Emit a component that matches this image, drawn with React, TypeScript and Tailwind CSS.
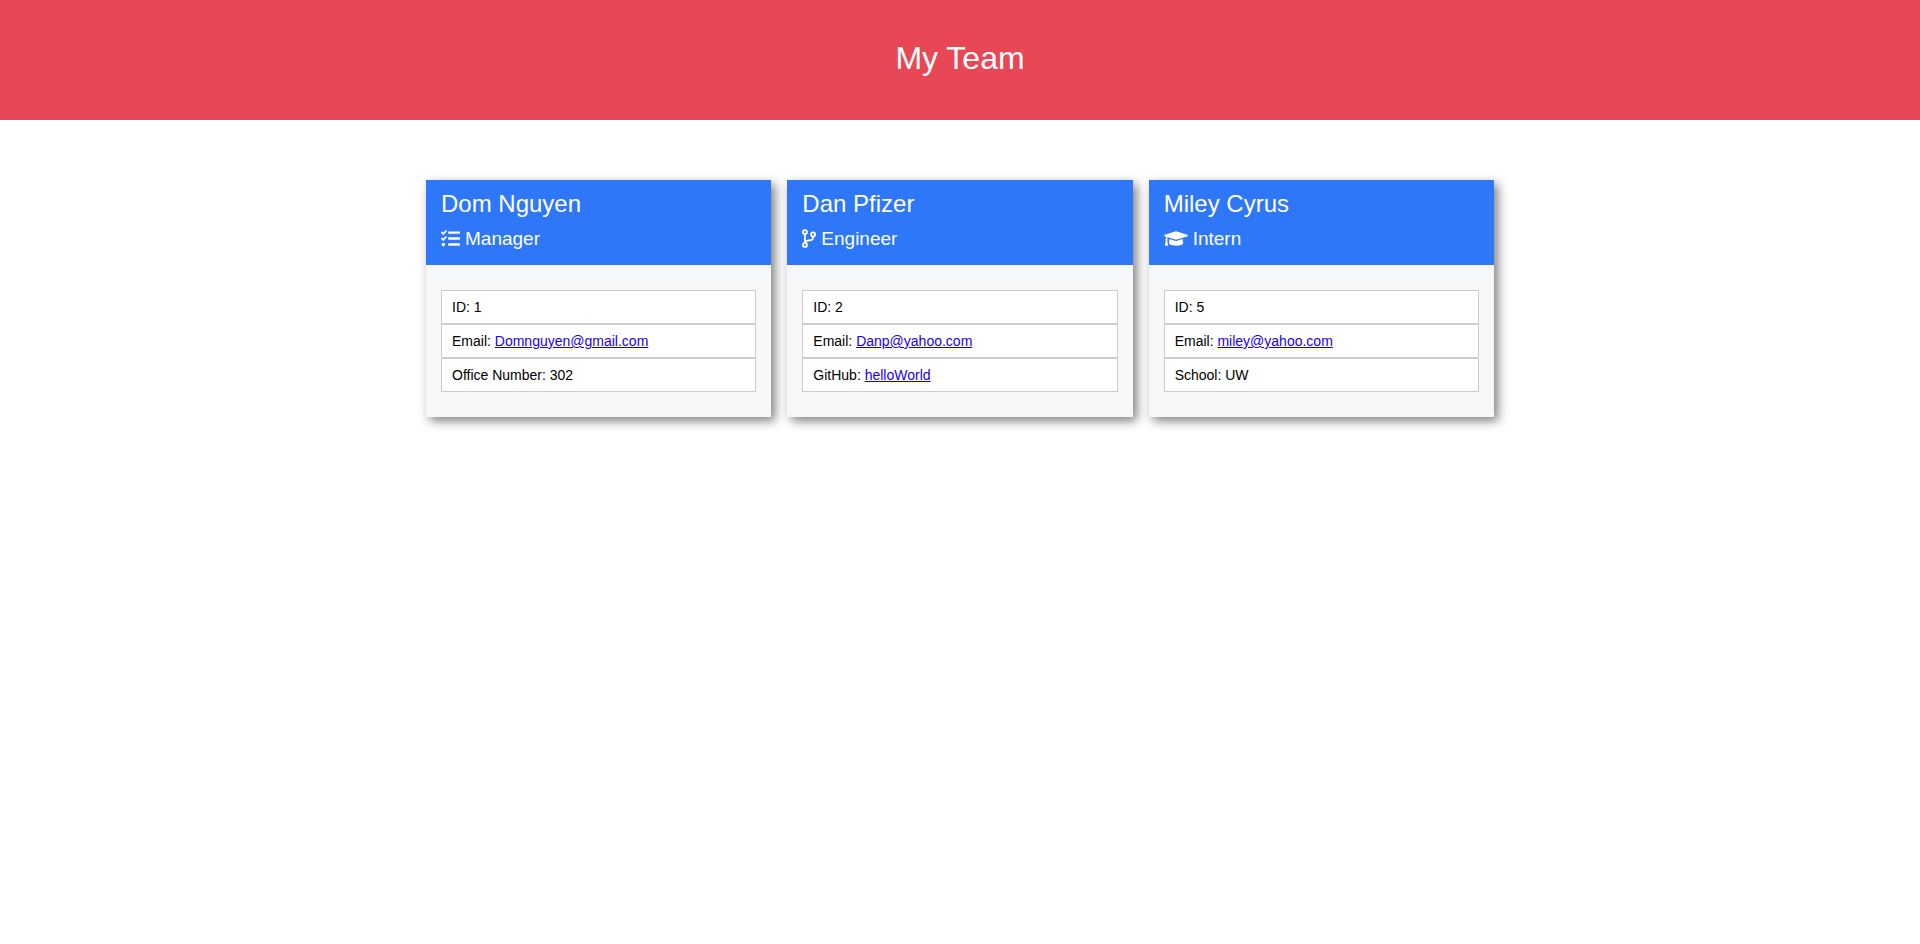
import type { ReactNode } from "react";
import { FaGraduationCap, FaTasks } from "react-icons/fa";

type Detail = { label: string; value: string; href?: string };
type Member = { name: string; role: string; icon: ReactNode; details: Detail[] };

function BranchIcon() {
  return (
    <svg
      viewBox="0 0 384 512"
      className="h-[19px] w-[14px]"
      fill="none"
      stroke="currentColor"
      strokeWidth="50"
      aria-hidden="true"
    >
      <circle cx="80" cy="80" r="55" />
      <circle cx="304" cy="144" r="55" />
      <circle cx="80" cy="432" r="55" />
      <path d="M80 135v242" />
      <path d="M305 199c0 108-52 104-122 111-42 4-80 10-96 40" />
    </svg>
  );
}

const team: Member[] = [
  {
    name: "Dom Nguyen",
    role: "Manager",
    icon: <FaTasks className="h-[19px] w-[19px]" aria-hidden="true" />,
    details: [
      { label: "ID", value: "1" },
      { label: "Email", value: "Domnguyen@gmail.com", href: "mailto:Domnguyen@gmail.com" },
      { label: "Office Number", value: "302" },
    ],
  },
  {
    name: "Dan Pfizer",
    role: "Engineer",
    icon: <BranchIcon />,
    details: [
      { label: "ID", value: "2" },
      { label: "Email", value: "Danp@yahoo.com", href: "mailto:Danp@yahoo.com" },
      { label: "GitHub", value: "helloWorld", href: "https://github.com/helloWorld" },
    ],
  },
  {
    name: "Miley Cyrus",
    role: "Intern",
    icon: <FaGraduationCap className="h-[19px] w-[24px]" aria-hidden="true" />,
    details: [
      { label: "ID", value: "5" },
      { label: "Email", value: "miley@yahoo.com", href: "mailto:miley@yahoo.com" },
      { label: "School", value: "UW" },
    ],
  },
];

function MemberCard({ member }: { member: Member }) {
  return (
    <article className="bg-[#f5f7f9] shadow-[4px_4px_10px_#808080]">
      <header className="bg-[#2e77f8] px-[15px] pt-2 pb-[14px] text-white">
        <h2 className="text-2xl leading-8">{member.name}</h2>
        <h3 className="mt-[6px] flex items-center gap-[5px] text-[19px] leading-[25px]">
          {member.icon}
          {member.role}
        </h3>
      </header>
      <ul className="px-[15px] py-[25px] text-sm leading-4 text-black">
        {member.details.map((detail) => (
          <li key={detail.label} className="border border-[#cccccc] bg-white px-[10px] py-2">
            {detail.label}:{" "}
            {detail.href ? (
              <a href={detail.href} className="text-[#1800ee] underline">
                {detail.value}
              </a>
            ) : (
              detail.value
            )}
          </li>
        ))}
      </ul>
    </article>
  );
}

export default function App() {
  return (
    <div className="min-h-screen bg-white font-['Liberation_Sans',Arial,sans-serif]">
      <header className="bg-[#e84855] px-4 pt-[38px] pb-[42px] text-center text-white">
        <h1 className="text-[32px] leading-10">My Team</h1>
      </header>
      <main className="mx-auto mt-[60px] grid max-w-[1068px] grid-cols-1 gap-4 md:grid-cols-3">
        {team.map((member) => (
          <MemberCard key={member.name} member={member} />
        ))}
      </main>
    </div>
  );
}
